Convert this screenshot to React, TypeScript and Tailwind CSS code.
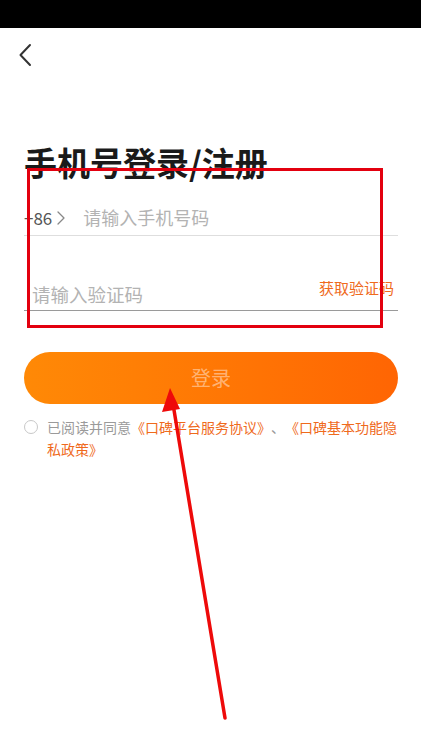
import React from "react";

const font = { fontFamily: '"Noto Sans CJK SC", "Noto Sans", sans-serif' };

function BackIcon() {
    return (
        <svg width="14" height="24" viewBox="0 0 14 24" fill="none">
            <path d="M12 2 L2.5 12 L12 22" stroke="#333" strokeWidth="2" strokeLinecap="round" strokeLinejoin="round" />
        </svg>
    );
}

function SmallChevron() {
    return (
        <svg width="8" height="14" viewBox="0 0 8 14" fill="none">
            <path d="M1 1 L7 7 L1 13" stroke="#888" strokeWidth="1.3" strokeLinecap="round" strokeLinejoin="round" />
        </svg>
    );
}

// red markup drawn on top of the screenshot
function Annotations() {
    return (
        <>
            <div className="absolute left-[27px] top-[168px] w-[356px] h-[160px] border-[3px] border-[#e3000f] pointer-events-none" />
            <svg className="absolute left-0 top-0 pointer-events-none" width="421" height="750" viewBox="0 0 421 750">
                <line x1="225" y1="718" x2="173" y2="404" stroke="#ee0a0a" strokeWidth="3.5" strokeLinecap="round" />
                <polygon points="170,388 162,412 180,409" fill="#ee0a0a" />
            </svg>
        </>
    );
}

export default function App() {
    return (
        <div className="relative w-[421px] h-[750px] bg-white overflow-hidden" style={font}>
            <div className="h-[28px] bg-black" />

            <div className="h-[56px] pl-[18px] pt-[15px]">
                <BackIcon />
            </div>

            <div className="pl-6 pr-[23px]">
                <h1 className="mt-[58px] text-[33px] leading-[40px] font-bold text-[#1a1a1a]">手机号登录/注册</h1>

                <div className="mt-[18px] h-[36px] flex items-center border-b border-[#dedede]">
                    <span className="text-[17px] text-[#555]">+86</span>
                    <span className="ml-[5px] mr-[18px]"><SmallChevron /></span>
                    <span className="text-[18px] text-[#b3b3b3]">请输入手机号码</span>
                </div>

                <div className="h-[75px] flex items-end justify-between border-b border-[#9a9a9a] pb-[3px]">
                    <span className="ml-2 text-[18.5px] leading-[26px] text-[#b3b3b3]">请输入验证码</span>
                    <span className="mb-[8px] mr-1 text-[15px] leading-[22px] text-[#ef6a1c]">获取验证码</span>
                </div>

                <button className="mt-[41px] w-full h-[52px] rounded-full bg-gradient-to-r from-[#ff8906] to-[#ff6503] text-[20px] text-white/45">
                    登录
                </button>

                <div className="mt-[12px] flex items-start text-[14px] leading-[22px]">
                    <span className="mt-[4px] w-[14px] h-[14px] rounded-full border border-[#c8c8c8] shrink-0" />
                    <p className="ml-[9px] text-[#9a9a9a] [text-spacing-trim:space-all] [font-feature-settings:'fwid']">
                        已阅读并同意<span className="text-[#ef6a1c]">《口碑平台服务协议》</span>、<span className="text-[#ef6a1c]">《口碑基本功能隐私政策》</span>
                    </p>
                </div>
            </div>

            <Annotations />
        </div>
    );
}
